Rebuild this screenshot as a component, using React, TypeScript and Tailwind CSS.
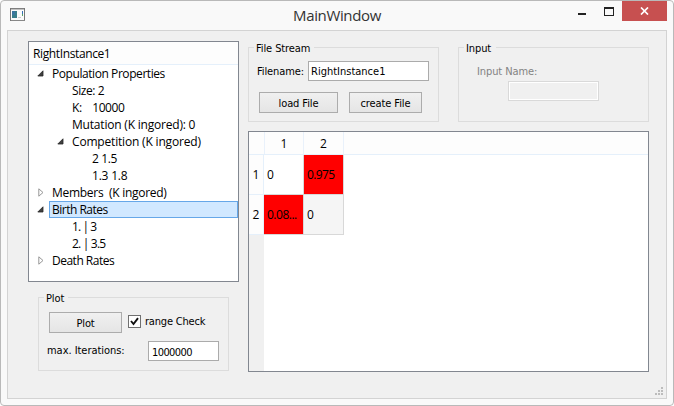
import type { ReactNode } from "react";

const segoe = "font-['Open_Sans','Noto_Sans',sans-serif] [font-stretch:normal]";
const tahoma = "font-['DejaVu_Sans_Condensed','DejaVu_Sans',sans-serif] [font-stretch:condensed]";

type Row = { text: string; level: number; state?: "open" | "closed"; selected?: boolean; spacing: string };

const rows: Row[] = [
  { text: "Population Properties", level: 0, state: "open", spacing: "tracking-[-0.43px]" },
  { text: "Size: 2", level: 1, spacing: "tracking-[-0.4px]" },
  { text: "K:    10000", level: 1, spacing: "tracking-[-0.45px]" },
  { text: "Mutation (K ingored): 0", level: 1, spacing: "tracking-[-0.2px]" },
  { text: "Competition (K ingored)", level: 1, state: "open", spacing: "tracking-[-0.18px]" },
  { text: "2 1.5", level: 2, spacing: "tracking-[-0.4px]" },
  { text: "1.3 1.8", level: 2, spacing: "tracking-[-0.2px]" },
  { text: "Members  (K ingored)", level: 0, state: "closed", spacing: "tracking-[-0.28px]" },
  { text: "Birth Rates", level: 0, state: "open", selected: true, spacing: "tracking-[-0.5px]" },
  { text: "1. | 3", level: 1, spacing: "tracking-[-0.9px]" },
  { text: "2. | 3.5", level: 1, spacing: "tracking-[-0.8px]" },
  { text: "Death Rates", level: 0, state: "closed", spacing: "tracking-[-0.5px]" },
];

const indents = ["w-5", "w-10", "w-[60px]"];

function Arrow({ state }: { state?: "open" | "closed" }) {
  if (state === "open")
    return (
      <svg width="7" height="7" viewBox="0 0 7 7" className="mt-[5px]">
        <path d="M6 .8V6H.8Z" fill="#404040" stroke="#262626" strokeWidth=".8" />
      </svg>
    );
  if (state === "closed")
    return (
      <svg width="6" height="9" viewBox="0 0 6 9" className="mt-[4px]">
        <path d="M.8 .8V8.2L5 4.5Z" fill="#fff" stroke="#979797" />
      </svg>
    );
  return null;
}

function TreeRow({ row }: { row: Row }) {
  return (
    <div className="flex h-[17px]">
      <div className={`flex shrink-0 justify-end pr-[5px] ${indents[row.level]}`}>
        <Arrow state={row.state} />
      </div>
      <div
        className={`flex h-[17px] flex-1 items-center whitespace-pre border pl-[2px] text-[12px] leading-[15px] ${row.spacing} ${
          row.selected ? "border-[#66a7e8] bg-[#d1e8ff]" : "border-transparent"
        }`}
      >
        {row.text}
      </div>
    </div>
  );
}

function Group({ title, titleWidth, className, children }: { title: string; titleWidth: string; className: string; children: ReactNode }) {
  return (
    <div className={`border border-[#dcdcdc] ${className}`}>
      <div className={`-mt-[7px] ml-[5px] h-[15px] bg-[#f0f0f0] pl-[2px] leading-[16px] ${titleWidth}`}>{title}</div>
      {children}
    </div>
  );
}

function Button({ className, children }: { className: string; children: ReactNode }) {
  return (
    <button
      className={`flex h-[21px] items-center justify-center border border-[#acacac] bg-linear-to-b from-[#f0f0f0] to-[#e5e5e5] pt-[2px] leading-[17px] ${className}`}
    >
      {children}
    </button>
  );
}

export default function App() {
  return (
    <div className="flex h-[406px] w-[674px] flex-col overflow-hidden rounded-[4px] border border-[#b9b9b9] bg-[#f9f9f9] text-black">
      <div className="flex h-[29px]">
        <div className="w-[283px] pl-[9px] pt-[7px]">
          <svg width="16" height="14" viewBox="0 0 16 14">
            <rect x=".5" y=".5" width="14" height="12" fill="#fbfbfb" stroke="#777" />
            <path d="M1 1h13M1 12.5h14" stroke="#888" />
            <rect x="2" y="3" width="5" height="7" fill="#397e8b" />
            <rect x="2" y="3" width="3" height="4" fill="#3b76a0" />
            <path d="M8 9.5h3" stroke="#ccc" />
            <path d="M12.5 3v3" stroke="#3972b8" />
            <path d="M12.5 6v2" stroke="#57a06a" />
          </svg>
        </div>
        <div className={`w-[106px] pt-[4px] text-center text-[15px] leading-[20px] tracking-[-0.35px] text-[#333] ${segoe}`}>MainWindow</div>
        <div className="flex flex-1 justify-end pr-[6px]">
          <svg width="37" height="20" viewBox="0 0 37 20" className="mr-[8px]" shapeRendering="crispEdges">
            <path d="M1 12h8v2H1Z" fill="#222" />
            <path d="M27 6h10v9H27ZM28 8v6h8V8Z" fill="#222" fillRule="evenodd" />
          </svg>
          <div className="flex h-[20px] w-[45px] items-center justify-center bg-[#c75050]">
            <svg width="9" height="8" viewBox="0 0 9 8">
              <path d="M1 .5 8 7.5M8 .5 1 7.5" stroke="#fff" strokeWidth="1.7" />
            </svg>
          </div>
        </div>
      </div>

      <div className={`mx-[6px] flex h-[369px] flex-col border border-[#d3d3d3] bg-[#f0f0f0] text-[11px] tracking-[-0.1px] ${tahoma}`}>
        <div className="flex h-[342px] gap-[9px] pl-[20px] pt-[10px]">
          <div className="w-[211px]">
            <div className={`h-[241px] border border-[#828790] bg-white ${segoe}`}>
              <div className="h-[23px] border-b border-[#e5f0fb] bg-[#fdfdfd] pl-[4px] text-[12px] leading-[23px] tracking-[-0.38px]">
                RightInstance1
              </div>
              {rows.map((row) => (
                <TreeRow key={row.text} row={row} />
              ))}
            </div>
            <Group title="Plot" titleWidth="w-[24px]" className="ml-[10px] mt-[15px] h-[74px] w-[191px]">
              <div className="flex pl-[10px] pt-[6px]">
                <Button className="w-[73px]">Plot</Button>
                <div className="ml-[6px] mt-[3px] flex h-[13px] items-center">
                  <svg width="13" height="13" viewBox="0 0 13 13">
                    <rect x=".5" y=".5" width="12" height="12" fill="#fff" stroke="#707070" />
                    <path d="m3 6 2.5 3L10 3.2" fill="none" stroke="#111" strokeWidth="1.9" />
                  </svg>
                  <span className="ml-[4px] pt-[2px] tracking-[-0.2px]">range Check</span>
                </div>
              </div>
              <div className="flex pl-[8px] pt-[8px]">
                <span className="w-[101px] leading-[20px] tracking-[-0.04px]">max. Iterations:</span>
                <div className="h-[20px] w-[71px] border border-[#ababab] bg-white pl-[3px] leading-[21px] tracking-[-0.6px]">1000000</div>
              </div>
            </Group>
          </div>

          <div className="w-[401px]">
            <div className="mt-[6px] flex justify-between">
              <Group title="File Stream" titleWidth="w-[60px]" className="h-[75px] w-[191px]">
                <div className="flex pl-[8px] pt-[5px]">
                  <span className="w-[51px] leading-[22px]">Filename:</span>
                  <div className="h-[20px] w-[121px] border border-[#ababab] bg-white pl-[2px] leading-[20px] tracking-[0px]">RightInstance1</div>
                </div>
                <div className="flex gap-[11px] pl-[10px] pt-[9px]">
                  <Button className="w-[79px]">load File</Button>
                  <Button className="w-[73px]">create File</Button>
                </div>
              </Group>
              <Group title="Input" titleWidth="w-[32px]" className="h-[75px] w-[191px]">
                <div className="h-[25px] pl-[18px] pt-[5px] leading-[22px] text-[#838383]">Input Name:</div>
                <div className="ml-[49px] h-[20px] w-[91px] border border-[#d9d9d9] bg-[#f0f0f0] shadow-[inset_0_0_0_1px_#fff]" />
              </Group>
            </div>

            <div className={`mt-[9px] flex h-[241px] flex-col border border-[#828790] bg-white text-[12px] ${segoe}`}>
              <div className="flex h-[23px] border-b border-[#e5f0fb] bg-[#fdfdfd] text-center leading-[23px]">
                <div className="w-[15px]" />
                <div className="w-[40px] border-x border-[#e9f1fb]">1</div>
                <div className="w-[40px] border-r border-[#e9f1fb]">2</div>
              </div>
              <div className="flex h-[40px] leading-[40px]">
                <div className="w-[15px] border-b border-r border-[#e5f0fb] bg-[#fdfdfd] text-center">1</div>
                <div className="w-[40px] border-b border-r border-[#d8d8d8] pl-[3px]">0</div>
                <div className="w-[40px] border-b border-r border-[#d8d8d8] bg-[#ff0000] pl-[3px] tracking-[-0.6px]">0.975</div>
              </div>
              <div className="flex h-[40px] leading-[40px]">
                <div className="w-[15px] border-b border-r border-[#e5f0fb] bg-[#fdfdfd] text-center">2</div>
                <div className="w-[40px] border-b border-r border-[#d8d8d8] bg-[#ff0000] pl-[3px] tracking-[-0.5px]">0.08...</div>
                <div className="w-[40px] border-b border-r border-[#d8d8d8] bg-[#f5f5f5] pl-[3px]">0</div>
              </div>
              <div className="w-[15px] flex-1 bg-[#f0f0f0]" />
            </div>
          </div>
        </div>
        <div className="flex flex-1 items-end justify-end pb-[3px] pr-[3px]">
          <svg width="8" height="8" viewBox="0 0 8 8" shapeRendering="crispEdges">
            <path d="M6 0h2v2H6ZM3 3h2v2H3ZM6 3h2v2H6ZM0 6h2v2H0ZM3 6h2v2H3ZM6 6h2v2H6Z" fill="#bcbcbc" />
          </svg>
        </div>
      </div>
    </div>
  );
}
